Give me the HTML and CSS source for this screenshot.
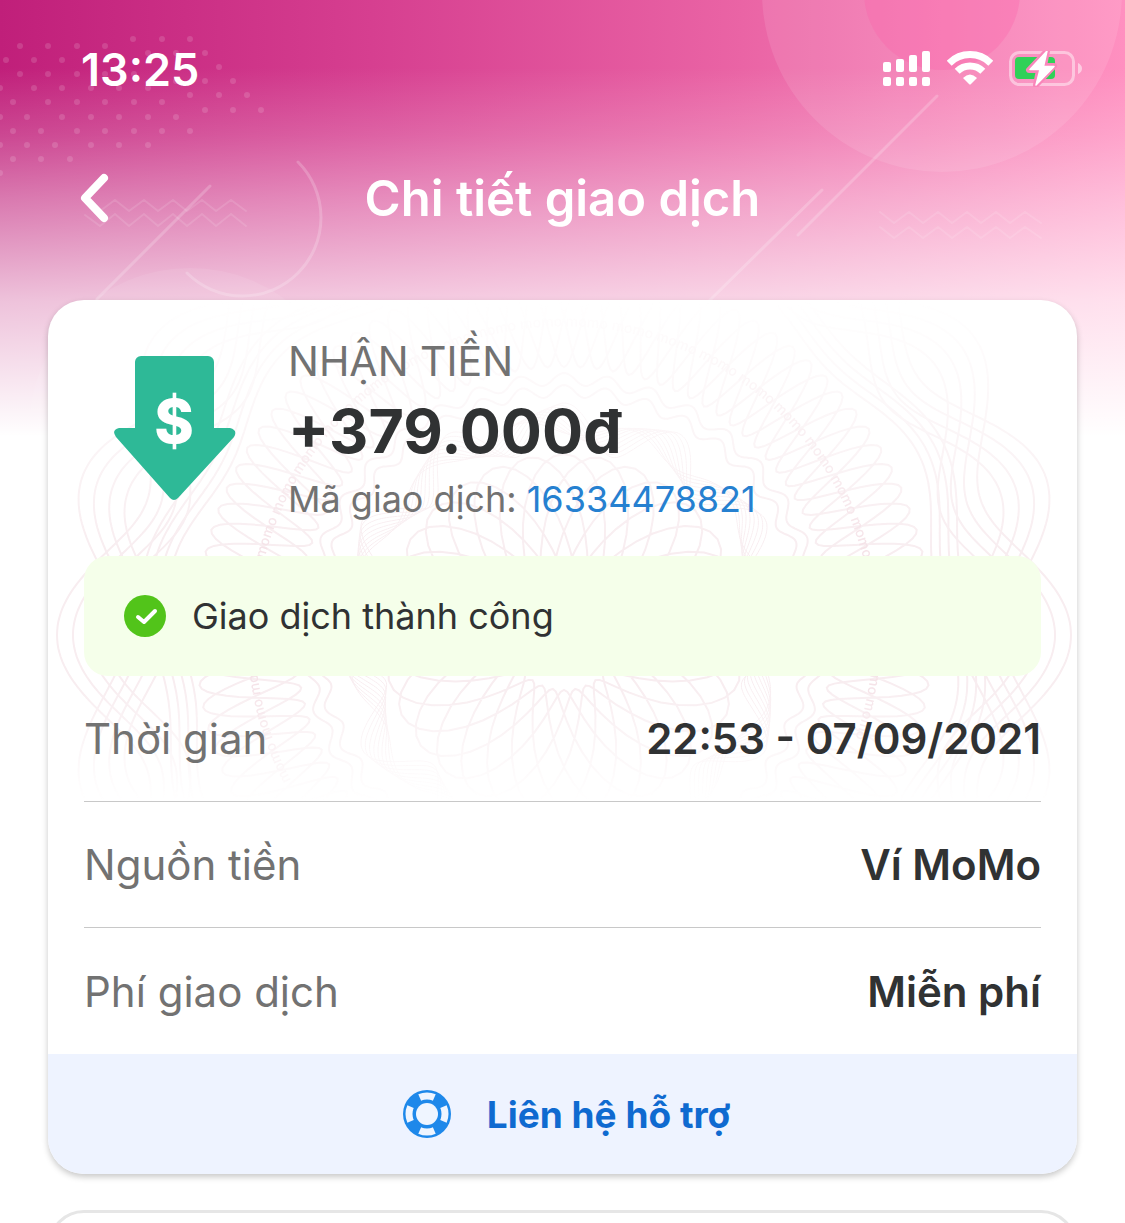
FILE: index.html
```html
<!DOCTYPE html>
<html lang="vi">

<head>
    <meta charset="UTF-8">
    <meta name="viewport" content="width=device-width, initial-scale=1.0">
    <title>Chi tiết giao dịch</title>
    <link rel="stylesheet" href="styles.css">
</head>

<body>
    <svg class="backdrop" viewBox="0 0 1125 450" preserveAspectRatio="xMidYMin slice" aria-hidden="true">
        <defs>
            <linearGradient id="pink" x1="0" x2="1" y1="0" y2="0">
                <stop offset="0" stop-color="#c01f7a" />
                <stop offset="0.33" stop-color="#d63f90" />
                <stop offset="0.66" stop-color="#ea64a5" />
                <stop offset="1" stop-color="#ff90c0" />
            </linearGradient>
            <linearGradient id="fade" x1="0" x2="0" y1="0" y2="1">
                <stop offset="0.15" stop-color="#fff" stop-opacity="0" />
                <stop offset="0.3" stop-color="#fff" stop-opacity="0.18" />
                <stop offset="0.44" stop-color="#fff" stop-opacity="0.4" />
                <stop offset="0.67" stop-color="#fff" stop-opacity="0.73" />
                <stop offset="0.97" stop-color="#fff" stop-opacity="1" />
            </linearGradient>
        </defs>
        <rect width="1125" height="450" fill="url(#pink)" />
        <circle cx="942" cy="-8" r="180" fill="#fff" opacity="0.1" />
        <circle cx="942" cy="-8" r="78" fill="#fb5fa8" opacity="0.3" />
        <rect width="1125" height="450" fill="url(#fade)" />
        <circle cx="190" cy="429" r="161" fill="#fff" opacity="0.08" />
        <!-- dots -->
        <path class="dots" d="M133 39h0m29 0h0m28 0h0M20 46h0m28 0h0m29 0h0m28 0h0M148 53h0m28 0h0m29 0h0M6 60h0m28 0h0m28 0h0M219 67h0M20 74h0m28 0h0m29 0h0m28 0h0m29 0h0M176 81h0m29 0h0m28 0h0M0 88h0m34 0h0m28 0h0m29 0h0m28 0h0m29 0h0M190 95h0m29 0h0m28 0h0M13 102h0m35 0h0m29 0h0m28 0h0m29 0h0m28 0h0M205 110h0m28 0h0m28 0h0M0 117h0m27 0h0m35 0h0m29 0h0m28 0h0m29 0h0m28 0h0M13 131h0m28 0h0m36 0h0m28 0h0m29 0h0m28 0h0m28 0h0M0 145h0m27 0h0m28 0h0m36 0h0m28 0h0m29 0h0M13 159h0m28 0h0m29 0h0M0 173h0" />
        <!-- lines, arc -->
        <path class="strokes" d="M210 186L97 299M937 96L798 235M822 190L710 300M298 162A78 78 0 0 1 187 273" />
        <!-- zigzags -->
        <path class="zigzag" d="M100 211l15-11 14 11 15-11 14 11 15-11 14 11 15-11 14 11 15-11 15 11M85 215l15 11 15-12 14 12 15-12 14 12 15-12 14 12 15-12 14 12 15-12 15 12M880 212l14 11 15-11 14 11 15-11 14 11 15-11 14 11 15-11 14 11 15-11 16 11M880 227l14 11 15-11 14 11 15-11 14 11 15-11 14 11 15-11 14 11 15-11 16 11" />
    </svg>

    <div class="screen">
        <div class="status-bar">
            <time class="clock">13:25</time>
            <div class="status-icons">
                <svg width="48" height="36" viewBox="0 0 48 36" fill="#fff" aria-hidden="true">
                    <rect x="0" y="11" width="8" height="10" rx="2" />
                    <rect x="13" y="8" width="8" height="13" rx="2" />
                    <rect x="26" y="4" width="8" height="17" rx="2" />
                    <rect x="39" y="0" width="8" height="21" rx="2" />
                    <rect x="0" y="26" width="8" height="9" rx="2" />
                    <rect x="13" y="26" width="8" height="9" rx="2" />
                    <rect x="26" y="26" width="8" height="9" rx="2" />
                    <rect x="39" y="26" width="8" height="9" rx="2" />
                </svg>
                <svg width="46" height="36" viewBox="0 0 46 36" fill="none" stroke="#fff" aria-hidden="true">
                    <path d="M2.2 12.2a29.5 29.5 0 0 1 41.6 0" stroke-width="7" />
                    <path d="M10.2 20.3a18 18 0 0 1 25.6 0" stroke-width="7" />
                    <path d="M16 27q7-7 14 0L24 33q-1 1-2 0z" fill="#fff" stroke="none" />
                </svg>
                <svg width="73" height="36" viewBox="0 0 73 36" aria-hidden="true">
                    <rect x="1.5" y="1.5" width="63" height="32" rx="9" fill="none" stroke="#fff" stroke-opacity="0.45" stroke-width="3" />
                    <path d="M69 12q4 2 4 5.5t-4 5.5z" fill="#fff" opacity="0.5" />
                    <rect x="6" y="6" width="40" height="22" rx="4" fill="#30d158" />
                    <path d="M38 0L20 19h10l-3 15 18-19H35z" fill="#f986ba" stroke="#f986ba" stroke-width="6" stroke-linejoin="round" />
                    <path d="M38 0L21 18.5h10L27 34 45 15.5H34.5z" fill="#fff" stroke="#fff" stroke-width="1.5" stroke-linejoin="round" />
                </svg>
            </div>
        </div>

        <header class="nav-bar">
            <button type="button" class="back-btn" aria-label="Quay lại">
                <svg width="30" height="50" viewBox="0 0 30 50" fill="none" stroke="#fff" stroke-width="8" stroke-linecap="round" stroke-linejoin="round" aria-hidden="true">
                    <path d="M24 5L5 25l19 20" />
                </svg>
            </button>
            <h1>Chi tiết giao dịch</h1>
        </header>

        <main class="content">
            <section class="card">
                <svg class="guilloche" id="guilloche" viewBox="0 0 1029 506" preserveAspectRatio="xMidYMin meet" aria-hidden="true"></svg>

                <div class="summary">
                    <svg class="summary-icon" width="122" height="146" viewBox="0 0 122 146" aria-hidden="true">
                        <path d="M27 0h67a6 6 0 0 1 6 6v66h16q8 2 4 9L64 142q-4 4-8 0L2 81q-5-7 3-9h16V6a6 6 0 0 1 6-6z" fill="#2eb997" />
                        <text class="dollar" x="60" y="87" text-anchor="middle">$</text>
                    </svg>
                    <div class="summary-text">
                        <p class="summary-type">NHẬN TIỀN</p>
                        <p class="amount">+379.000đ</p>
                        <p class="trans-id">Mã giao dịch: <a href="#">16334478821</a></p>
                    </div>
                </div>

                <div class="result">
                    <svg width="42" height="42" viewBox="0 0 42 42" aria-hidden="true">
                        <circle cx="21" cy="21" r="21" fill="#52c41a" />
                        <path d="M14 22l6 5 11-11" fill="none" stroke="#fff" stroke-width="4" stroke-linecap="round" stroke-linejoin="round" />
                    </svg>
                    <span>Giao dịch thành công</span>
                </div>

                <dl class="details">
                    <div class="row">
                        <dt>Thời gian</dt>
                        <dd>22:53 - 07/09/2021</dd>
                    </div>
                    <div class="row">
                        <dt>Nguồn tiền</dt>
                        <dd>Ví MoMo</dd>
                    </div>
                    <div class="row">
                        <dt>Phí giao dịch</dt>
                        <dd>Miễn phí</dd>
                    </div>
                </dl>

                <a class="support" href="#">
                    <svg width="48" height="48" viewBox="0 0 48 48" aria-hidden="true">
                        <circle cx="24" cy="24" r="24" fill="#1e88ea" />
                        <circle cx="24" cy="24" r="18" fill="none" stroke="#eff5ff" stroke-width="7" pathLength="360" stroke-dasharray="48 42" stroke-dashoffset="24" />
                        <circle cx="24" cy="24" r="14" fill="#1e88ea" />
                        <circle cx="24" cy="24" r="11" fill="#eff5ff" />
                    </svg>
                    <span>Liên hệ hỗ trợ</span>
                </a>
            </section>

            <section class="next-card"></section>
        </main>
    </div>

    <script src="guilloche.js"></script>
</body>

</html>
```
FILE: guilloche.js
```js
document.addEventListener('DOMContentLoaded', function () {
    const NS = 'http://www.w3.org/2000/svg';
    const svg = document.getElementById('guilloche');
    const cx = 516;
    const cy = 335;

    // Closed wave around the centre: n peaks spread over the given number of turns
    function wave(radius, amp, n, turns, phase, className) {
        const steps = Math.max(720, n * 24);
        let d = '';
        for (let i = 0; i <= steps; i++) {
            const t = (i / steps) * turns * Math.PI * 2;
            const r = radius + amp * Math.cos((n / turns) * t + phase);
            const x = cx + r * Math.sin(t);
            const y = cy - r * Math.cos(t);
            d += (i ? 'L' : 'M') + x.toFixed(1) + ' ' + y.toFixed(1);
        }
        const path = document.createElementNS(NS, 'path');
        path.setAttribute('d', d);
        path.setAttribute('class', className);
        svg.appendChild(path);
    }

    // Outer lobes, two sets half a step apart
    for (let k = 0; k < 4; k++) {
        const max = 507 - k * 16;
        const min = 438 - k * 14;
        wave((max + min) / 2, (max - min) / 2, 10, 1, 0, 'line');
        wave((max + min) / 2, (max - min) / 2, 10, 1, Math.PI, 'line');
    }

    // Band inside the lobes
    for (let k = 0; k < 4; k++) {
        wave(386 + k * 9, 12, 10, 1, Math.PI / 2, 'line');
    }

    // Petal ring
    wave(318, 50, 103, 4, 0, 'line');

    // Scalloped rings
    wave(256, 6, 37, 1, 0, 'line');
    wave(244, 6, 37, 1, 0, 'line');

    // Fine weave
    for (let k = 0; k < 9; k++) {
        wave(208, 24 - k * 2, 12, 1, k * 0.3, 'fine');
    }

    // Centre rosette
    wave(118, 63, 31, 7, 0, 'line');

    // Lettering over the visible part of the ring
    const ring = document.createElementNS(NS, 'path');
    ring.setAttribute('id', 'ring');
    ring.setAttribute('d', `M${cx - 273} ${cy + 145}A309 309 0 1 1 ${cx + 273} ${cy + 145}`);
    ring.setAttribute('class', 'ring');
    const text = document.createElementNS(NS, 'text');
    const textPath = document.createElementNS(NS, 'textPath');
    textPath.setAttribute('href', '#ring');
    textPath.textContent = 'momo '.repeat(27).trim();
    text.appendChild(textPath);
    svg.append(ring, text);
});
```
FILE: styles.css
```css
:root {
    --text-primary: #303233;
    --text-secondary: #727272;
    --link: #2680d0;
    --link-strong: #0f6ad0;
    --line: #c8c8c8;
    --space: 36px;
}

* {
    margin: 0;
    padding: 0;
    box-sizing: border-box;
}

body {
    position: relative;
    background-color: #fff;
    color: var(--text-primary);
    font-family: Inter, 'Liberation Sans', sans-serif;
    font-size: 36px;
}

a {
    color: var(--link);
    text-decoration: none;
}

.backdrop {
    position: absolute;
    top: 0;
    left: 0;
    width: 100%;
    height: 450px;
}

.backdrop path {
    fill: none;
    stroke: #fff;
    stroke-linecap: round;
}

.backdrop .dots {
    stroke-width: 6;
    opacity: 0.14;
}

.backdrop .strokes {
    stroke-width: 3;
    opacity: 0.2;
}

.backdrop .zigzag {
    stroke-width: 2;
    opacity: 0.12;
}

.screen {
    position: relative;
    display: flex;
    flex-direction: column;
    min-height: 100vh;
}

.status-bar {
    display: flex;
    justify-content: space-between;
    align-items: center;
    height: 132px;
    padding: 6px 43px 0 81px;
}

.clock {
    color: #fff;
    font-size: 45px;
    font-weight: 600;
}

.status-icons {
    display: flex;
    align-items: center;
    gap: 16px;
}

.nav-bar {
    display: grid;
    grid-template-columns: 1fr auto 1fr;
    align-items: center;
    height: 132px;
    padding: 0 80px;
}

.back-btn {
    justify-self: start;
    display: flex;
    border: none;
    background: none;
    cursor: pointer;
}

h1 {
    color: #fff;
    font-size: 49px;
    font-weight: 600;
}

.content {
    flex: 1;
    display: flex;
    flex-direction: column;
    gap: var(--space);
    padding: var(--space) 48px 0;
}

.card {
    position: relative;
    overflow: hidden;
    background-color: #fff;
    border-radius: var(--space);
    box-shadow: 0 3px 6px rgba(0, 0, 0, 0.22);
}

.guilloche {
    position: absolute;
    top: 0;
    left: 0;
    width: 100%;
    mask-image: linear-gradient(transparent, #000 50%, #000 76%, transparent 99%);
}

.guilloche path {
    fill: none;
}

.guilloche .line {
    stroke: #f8edf0;
    stroke-width: 2;
}

.guilloche .fine {
    stroke: #f8edf0;
    stroke-width: 1;
}

.guilloche text {
    fill: #f5e3e8;
    font-size: 14px;
    font-weight: 500;
}

.summary {
    position: relative;
    display: flex;
    align-items: center;
    gap: 52px;
    height: 256px;
    padding: 2px 66px 0;
}

.summary-icon {
    flex-shrink: 0;
}

.dollar {
    fill: #fff;
    font-size: 60px;
    font-weight: 800;
}

.summary-type {
    color: var(--text-secondary);
    font-size: 41px;
    line-height: 64px;
}

.amount {
    font-size: 61px;
    font-weight: 700;
    line-height: 76px;
}

.trans-id {
    color: var(--text-secondary);
    line-height: 60px;
}

.result {
    position: relative;
    display: flex;
    align-items: center;
    gap: 26px;
    height: 120px;
    margin: 0 var(--space);
    padding: 0 40px;
    border-radius: 24px;
    background-color: #f5ffea;
}

.details {
    position: relative;
    padding: 0 var(--space);
}

.row {
    display: flex;
    justify-content: space-between;
    align-items: center;
    height: 126px;
    border-bottom: 1px solid var(--line);
    font-size: 42px;
}

.row:last-child {
    border-bottom: none;
}

.row dt {
    color: var(--text-secondary);
}

.row dd {
    font-weight: 600;
}

.support {
    position: relative;
    display: flex;
    justify-content: center;
    align-items: center;
    gap: var(--space);
    height: 120px;
    padding-left: 8px;
    background-color: #eef3ff;
    color: var(--link-strong);
    font-size: 37px;
    font-weight: 700;
}

/* Only the top edge of the next card shows above the fold */
.next-card {
    position: relative;
    flex: 1;
    overflow: hidden;
}

.next-card::before {
    content: '';
    position: absolute;
    top: 0;
    left: 0;
    right: 0;
    height: 120px;
    border: 3px solid #e6e6e6;
    border-radius: var(--space);
}
```
